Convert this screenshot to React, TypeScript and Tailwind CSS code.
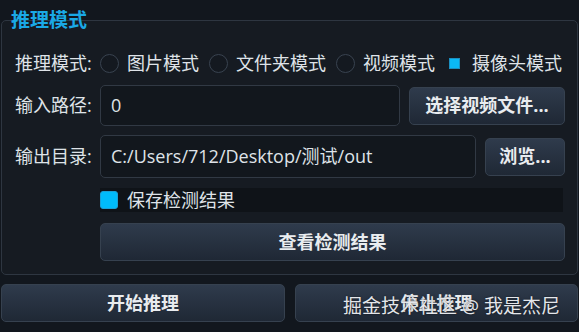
const font = { fontFamily: '"Open Sans", "Noto Sans CJK SC", sans-serif' };

const Radio = ({ label, checked = false }: { label: string; checked?: boolean }) => (
  <div className="flex items-center gap-[8px] mr-[10px] shrink-0">
    <div
      className={
        checked
          ? "w-[19px] h-[19px] flex items-center justify-center"
          : "w-[19px] h-[19px] rounded-full border border-[#394350] bg-[#141920]"
      }
    >
      {checked && <div className="w-[11px] h-[11px] bg-[#0bb8f5] border border-[#1c8fc0]" />}
    </div>
    <span>{label}</span>
  </div>
);

const Button = ({ children, className = "" }: { children: React.ReactNode; className?: string }) => (
  <button
    className={
      "h-[38px] shrink-0 rounded-[5px] border border-[#36414f] bg-gradient-to-b from-[#2f3b4c] to-[#1f2835] text-[#e9ecef] font-bold text-[18px] flex items-center justify-center " +
      className
    }
  >
    {children}
  </button>
);

export default function App() {
  return (
    <div
      className="w-[579px] h-[332px] bg-[#12171e] text-[#dfe3e8] text-[18px] px-[1px] pt-[20px] relative overflow-hidden"
      style={font}
    >
      {/* Group box */}
      <div className="relative rounded-[5px] border border-[#2e3641] bg-[#161b22] pl-[13px] pr-[14px] pt-[27px] pb-[13px]">
        <div className="absolute left-[9px] top-[-13px] text-[19px] font-bold text-[#1aa9e6] leading-[24px]">
          推理模式
        </div>

        {/* mode row */}
        <div className="flex items-center h-[30px] whitespace-nowrap">
          <span className="w-[85px] shrink-0">推理模式:</span>
          <Radio label="图片模式" />
          <Radio label="文件夹模式" />
          <Radio label="视频模式" />
          <Radio label="摄像头模式" checked />
        </div>

        {/* input path */}
        <div className="flex items-center mt-[7px] h-[41px]">
          <span className="w-[85px] shrink-0">输入路径:</span>
          <div className="w-[300px] shrink-0 h-[41px] rounded-[5px] border border-[#313944] bg-[#12171d] flex items-center pl-[10px]">
            0
          </div>
          <Button className="ml-[9px] w-[156px]">选择视频文件...</Button>
        </div>

        {/* output dir */}
        <div className="flex items-center mt-[9px] h-[43px]">
          <span className="w-[85px] shrink-0">输出目录:</span>
          <div className="w-[376px] shrink-0 h-[43px] rounded-[5px] border border-[#313944] bg-[#12171d] flex items-center pl-[10px] whitespace-nowrap">
            C:/Users/712/Desktop/测试/out
          </div>
          <Button className="ml-[9px] w-[80px]">浏览...</Button>
        </div>

        {/* save checkbox */}
        <div className="ml-[85px] mt-[10px] h-[24px] bg-[#0f1318] flex items-center">
          <div className="w-[18px] h-[18px] rounded-[3px] bg-[#00bcfb] border border-[#1aa0d6]" />
          <span className="ml-[9px]">保存检测结果</span>
        </div>

        <Button className="ml-[85px] mt-[11px] w-[465px]">查看检测结果</Button>
      </div>

      {/* bottom buttons */}
      <div className="flex gap-[10px] mt-[9px]">
        <Button className="w-[284px]">开始推理</Button>
        <Button className="w-[283px]">停止推理</Button>
      </div>

      <div className="absolute left-[343px] top-[294px] text-[19px] text-[#e4e6ea] leading-[24px] whitespace-nowrap [text-shadow:0_0_2px_rgba(0,0,0,0.6)]">
        掘金技术社区 @ 我是杰尼
      </div>
    </div>
  );
}
